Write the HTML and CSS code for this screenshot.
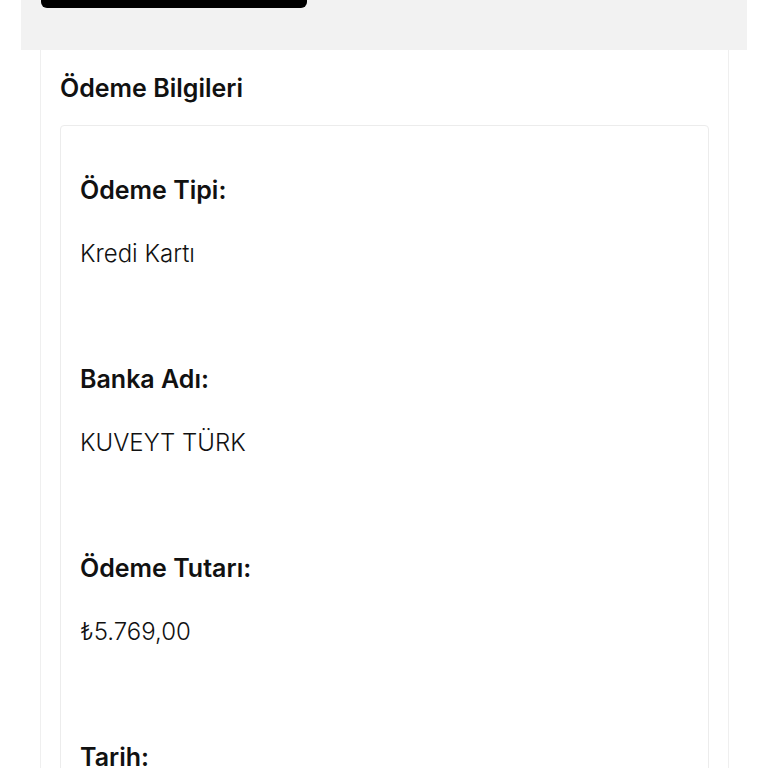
FILE: index.html
```html
<!DOCTYPE html>
<html lang="tr">
<head>
    <meta charset="UTF-8">
    <meta name="viewport" content="width=device-width, initial-scale=1.0">
    <title>Sipariş Detayı</title>
    <link rel="stylesheet" href="styles.css">
</head>
<body>
    <div class="order-head">
        <div class="back-btn"></div>
    </div>

    <div class="payment-card">
        <h3 class="card-title">Ödeme Bilgileri</h3>
        <div class="info-box">
            <div class="info-item">
                <h5 class="info-label">Ödeme Tipi:</h5>
                <p class="info-value">Kredi Kartı</p>
            </div>
            <div class="info-item">
                <h5 class="info-label">Banka Adı:</h5>
                <p class="info-value">KUVEYT TÜRK</p>
            </div>
            <div class="info-item">
                <h5 class="info-label">Ödeme Tutarı:</h5>
                <p class="info-value">₺5.769,00</p>
            </div>
            <div class="info-item">
                <h5 class="info-label">Tarih:</h5>
                <p class="info-value">12.03.2024</p>
            </div>
        </div>
    </div>
</body>
</html>
```

FILE: styles.css
```css
body {
    margin: 0;
    background: #fff;
    font-family: Inter, "Noto Sans", sans-serif;
    color: #111;
}

/* top grey panel (scrolled) */
.order-head {
    margin: 0 21px;
    height: 50px;
    background: #f2f2f2;
}

.back-btn {
    margin-left: 20px;
    width: 266px;
    height: 8px;
    background: #000;
    border-radius: 0 0 6px 6px;
}

/* payment card */
.payment-card {
    margin: 0 39px 0 40px;
    border: 1px solid #efefef;
    border-top: none;
    padding: 0 19px;
}

.card-title {
    margin: 0;
    padding: 22px 0 20px;
    font-size: 25px;
    line-height: 33px;
    font-weight: 600;
}

.info-box {
    border: 1px solid #ececec;
    border-radius: 4px;
    padding: 48px 19px 0;
}

.info-item {
    margin-bottom: 93px;
}

.info-label {
    margin: 0 0 30px;
    font-size: 25px;
    line-height: 33px;
    font-weight: 600;
}

.info-value {
    margin: 0;
    font-size: 24px;
    line-height: 33px;
    font-weight: 300;
}
```
